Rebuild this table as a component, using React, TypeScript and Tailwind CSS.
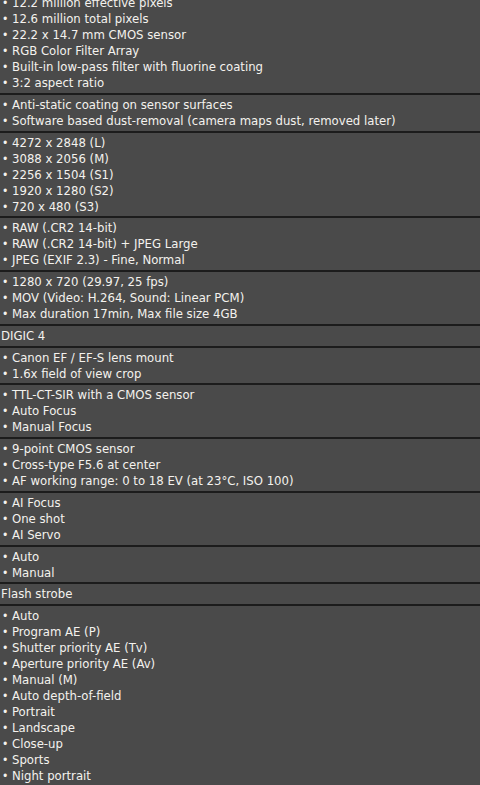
const groups: { plain?: boolean; items: string[] }[] = [
  {
    items: [
      "12.2 million effective pixels",
      "12.6 million total pixels",
      "22.2 x 14.7 mm CMOS sensor",
      "RGB Color Filter Array",
      "Built-in low-pass filter with fluorine coating",
      "3:2 aspect ratio",
    ],
  },
  {
    items: [
      "Anti-static coating on sensor surfaces",
      "Software based dust-removal (camera maps dust, removed later)",
    ],
  },
  {
    items: [
      "4272 x 2848 (L)",
      "3088 x 2056 (M)",
      "2256 x 1504 (S1)",
      "1920 x 1280 (S2)",
      "720 x 480 (S3)",
    ],
  },
  {
    items: [
      "RAW (.CR2 14-bit)",
      "RAW (.CR2 14-bit) + JPEG Large",
      "JPEG (EXIF 2.3) - Fine, Normal",
    ],
  },
  {
    items: [
      "1280 x 720 (29.97, 25 fps)",
      "MOV (Video: H.264, Sound: Linear PCM)",
      "Max duration 17min, Max file size 4GB",
    ],
  },
  { plain: true, items: ["DIGIC 4"] },
  { items: ["Canon EF / EF-S lens mount", "1.6x field of view crop"] },
  { items: ["TTL-CT-SIR with a CMOS sensor", "Auto Focus", "Manual Focus"] },
  {
    items: [
      "9-point CMOS sensor",
      "Cross-type F5.6 at center",
      "AF working range: 0 to 18 EV (at 23°C, ISO 100)",
    ],
  },
  { items: ["AI Focus", "One shot", "AI Servo"] },
  { items: ["Auto", "Manual"] },
  { plain: true, items: ["Flash strobe"] },
  {
    items: [
      "Auto",
      "Program AE (P)",
      "Shutter priority AE (Tv)",
      "Aperture priority AE (Av)",
      "Manual (M)",
      "Auto depth-of-field",
      "Portrait",
      "Landscape",
      "Close-up",
      "Sports",
      "Night portrait",
    ],
  },
];

export default function App() {
  return (
    <div className="h-[785px] w-[480px] overflow-hidden bg-[#4a4a4a] text-[#f4f2ee] font-['DejaVu_Sans_Condensed',sans-serif] text-[13px] leading-[16px]">
      <div className="-mt-[7px]">
        {groups.map((g, i) => (
          <div key={i} className="border-b-2 border-[#1c1c1c] pt-0.5 pb-[1.75px] last:border-b-0">
            {g.items.map((t) =>
              g.plain ? (
                <div key={t} className="pl-[1px]">{t}</div>
              ) : (
                <div key={t} className="flex">
                  <span className="w-[12px] shrink-0 pl-[2px] text-[12px]">•</span>
                  <span>{t}</span>
                </div>
              )
            )}
          </div>
        ))}
      </div>
    </div>
  );
}
